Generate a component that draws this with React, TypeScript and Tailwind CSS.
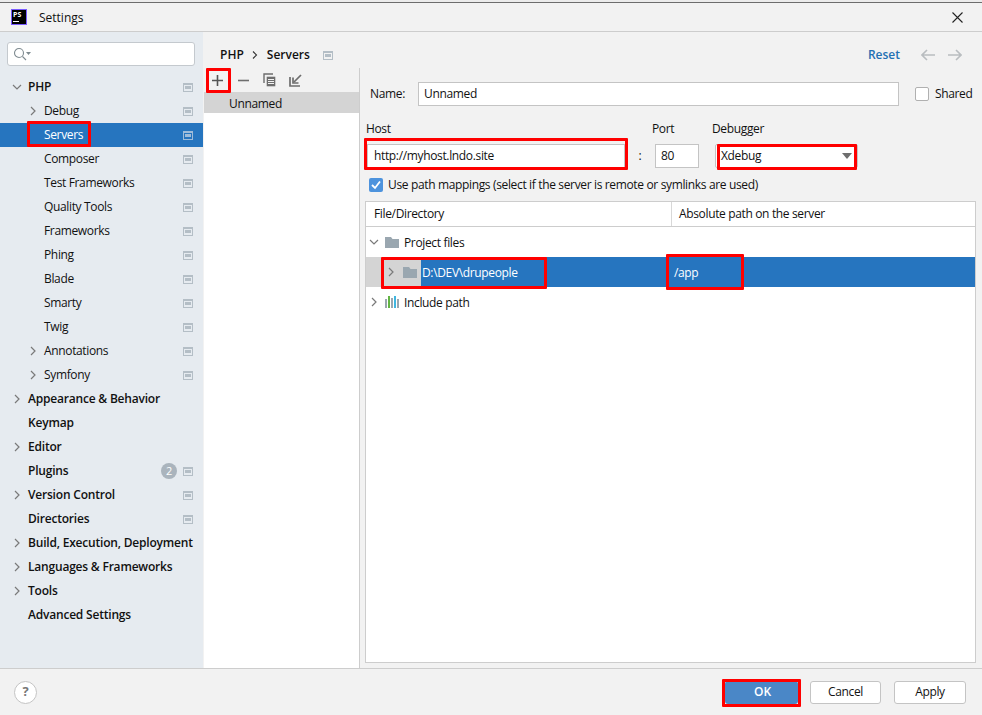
import React from "react";

const font = { fontFamily: '"Open Sans", "Noto Sans", sans-serif' };

function Chev({ open, color = "#7a7a7a" }: { open?: boolean; color?: string }) {
  return (
    <svg width="10" height="10" viewBox="0 0 10 10" fill="none" stroke={color} strokeWidth="1.2" className="shrink-0">
      {open ? <path d="M1 3 L5 7 L9 3" /> : <path d="M3 1 L7 5 L3 9" />}
    </svg>
  );
}

function Proj() {
  return (
    <svg width="14" height="12" viewBox="0 0 14 12" className="shrink-0">
      <path d="M0 1 H6 L7.5 3 H14 V12 H0 Z" fill="#9aa7b0" />
    </svg>
  );
}

function Pin({ light }: { light?: boolean }) {
  return (
    <svg width="10" height="9" viewBox="0 0 10 9" className="shrink-0">
      <rect x="0.5" y="0.5" width="9" height="8" fill="none" stroke={light ? "#9fbcd9" : "#b4bec6"} strokeWidth="1" />
      <rect x="2" y="3" width="6" height="3" fill={light ? "#9fbcd9" : "#b4bec6"} />
      <rect x="0" y="0" width="10" height="2" fill={light ? "#9fbcd9" : "#b4bec6"} />
    </svg>
  );
}

type Item = { label: string; level: 0 | 1; arrow?: "r" | "d"; pin?: boolean; sel?: boolean; badge?: string };
const items: Item[] = [
  { label: "PHP", level: 0, arrow: "d", pin: true },
  { label: "Debug", level: 1, arrow: "r", pin: true },
  { label: "Servers", level: 1, pin: true, sel: true },
  { label: "Composer", level: 1, pin: true },
  { label: "Test Frameworks", level: 1, pin: true },
  { label: "Quality Tools", level: 1, pin: true },
  { label: "Frameworks", level: 1, pin: true },
  { label: "Phing", level: 1, pin: true },
  { label: "Blade", level: 1, pin: true },
  { label: "Smarty", level: 1, pin: true },
  { label: "Twig", level: 1, pin: true },
  { label: "Annotations", level: 1, arrow: "r", pin: true },
  { label: "Symfony", level: 1, arrow: "r", pin: true },
  { label: "Appearance & Behavior", level: 0, arrow: "r" },
  { label: "Keymap", level: 0 },
  { label: "Editor", level: 0, arrow: "r" },
  { label: "Plugins", level: 0, pin: true, badge: "2" },
  { label: "Version Control", level: 0, arrow: "r", pin: true },
  { label: "Directories", level: 0, pin: true },
  { label: "Build, Execution, Deployment", level: 0, arrow: "r" },
  { label: "Languages & Frameworks", level: 0, arrow: "r" },
  { label: "Tools", level: 0, arrow: "r" },
  { label: "Advanced Settings", level: 0 },
];

function Row({ it }: { it: Item }) {
  return (
    <div className={`h-6 flex items-center pr-[10px] ${it.sel ? "bg-[#2675bf] text-white" : "text-[#111]"}`}>
      <div className={`flex items-center justify-center w-[10px] shrink-0 ${it.level ? "ml-[28px]" : "ml-[12px]"}`}>
        {it.arrow && <Chev open={it.arrow === "d"} />}
      </div>
      <span className={`ml-[6px] text-[12px] whitespace-nowrap ${it.level ? "" : "font-semibold tracking-[-0.2px]"}`}>{it.label}</span>
      <div className="flex-1" />
      {it.badge && (
        <span className="w-4 h-4 rounded-full bg-[#aab4bd] text-white text-[11px] flex items-center justify-center mr-[6px]">{it.badge}</span>
      )}
      {it.pin && <Pin light={it.sel} />}
    </div>
  );
}

function Box({ className, children }: { className: string; children?: React.ReactNode }) {
  return <div className={`bg-white border border-[#c4c4c4] flex items-center text-[12px] text-[#111] shrink-0 ${className}`}>{children}</div>;
}

function Mark({ x, y, w, h }: { x: string; y: string; w: string; h: string }) {
  return <div className={`absolute border-[3px] border-[#f00] rounded-[1px] pointer-events-none ${x} ${y} ${w} ${h}`} />;
}

export default function App() {
  return (
    <div style={font} className="relative w-[982px] h-[715px] bg-[#f2f2f2] flex flex-col overflow-hidden text-[#111] tracking-[-0.35px]">
      <div className="h-[2px] bg-[#ececec] shrink-0" />
      <div className="h-px bg-[#6d6d6d] shrink-0" />
      <div className="h-[29px] shrink-0 flex items-center border-b border-[#cdcdcd] pl-[11px] pr-[19px]">
        <div className="w-4 h-4 bg-black border border-[#7a5cff] text-white flex flex-col pl-[1px] pt-[1px] shrink-0 -mt-px">
          <span className="text-[7px] font-bold leading-[8px] tracking-normal">PS</span>
          <span className="w-[6px] h-px bg-white mt-[2px]" />
        </div>
        <span className="ml-[12px] text-[12px] mt-[2px] tracking-normal">Settings</span>
        <div className="flex-1" />
        <svg width="11" height="11" viewBox="0 0 11 11" stroke="#222" strokeWidth="1.1"><path d="M.5.5l10 10M10.5.5l-10 10" /></svg>
      </div>
      <div className="flex-1 flex min-h-0">
        <aside className="w-[203px] bg-[#e6ebf0] shrink-0 flex flex-col">
          <div className="ml-[7px] mr-[8px] mt-[10px] mb-[9px] h-6 bg-white border border-[#c4c9ce] rounded-[3px] flex items-center pl-[5px] shrink-0">
            <svg width="18" height="14" viewBox="0 0 18 14" fill="none" stroke="#7f8b91" strokeWidth="1.1">
              <circle cx="6" cy="6" r="4.5" />
              <path d="M9.5 9.5 L13 13" />
              <path d="M13 5 h5 l-2.5 3 z" fill="#7f8b91" stroke="none" />
            </svg>
          </div>
          {items.map((it) => <Row key={it.label} it={it} />)}
        </aside>
        <div className="w-px bg-[#f2f2f2] shrink-0" />
        <main className="flex-1 flex flex-col min-w-0">
          <div className="h-[36px] shrink-0 flex items-center pl-[16px] pr-[20px] pt-[10px] tracking-normal">
            <span className="text-[12px] font-semibold">PHP</span>
            <svg className="ml-[8px] mr-[9px]" width="6" height="8" viewBox="0 0 6 8" fill="none" stroke="#333" strokeWidth="1.1"><path d="M1 .5L4.5 4 1 7.5" /></svg>
            <span className="text-[12px] font-semibold">Servers</span>
            <span className="ml-[13px]"><Pin /></span>
            <div className="flex-1" />
            <span className="text-[12px] font-semibold text-[#2470b3]">Reset</span>
            <svg className="ml-[21px]" width="14" height="12" viewBox="0 0 14 12" fill="none" stroke="#b9bdc0" strokeWidth="1.6"><path d="M14 6H1M6 1L1 6l5 5" /></svg>
            <svg className="ml-[13px]" width="14" height="12" viewBox="0 0 14 12" fill="none" stroke="#b9bdc0" strokeWidth="1.6"><path d="M0 6h13M8 1l5 5-5 5" /></svg>
          </div>
          <div className="flex-1 flex min-h-0">
            <div className="w-[156px] shrink-0 bg-white border-r border-[#cdcdcd] flex flex-col">
              <div className="h-6 bg-[#f2f2f2] flex items-center pl-[7px] gap-[13px] shrink-0">
                <svg width="13" height="13" viewBox="0 0 13 13" stroke="#555" strokeWidth="1.6"><path d="M6.5 1v11M1 6.5h11" /></svg>
                <svg width="13" height="13" viewBox="0 0 13 13" stroke="#6e6e6e" strokeWidth="1.6"><path d="M1 6.5h11" /></svg>
                <svg width="13" height="14" viewBox="0 0 13 14" fill="none" stroke="#6e6e6e" strokeWidth="1.4"><path d="M1 10V1h9" /><rect x="3.7" y="3.7" width="8.6" height="9.6" fill="#6e6e6e" stroke="none" /><path d="M5 6.5h6M5 8.5h6M5 10.5h6" stroke="#f2f2f2" strokeWidth="1" /></svg>
                <svg width="13" height="13" viewBox="0 0 13 13" fill="none" stroke="#6e6e6e" strokeWidth="1.7"><path d="M1 3v9h10" /><path d="M12 1L5 8" /><path d="M4 3.5V9h5.5" /></svg>
              </div>
              <div className="h-[21px] bg-[#d4d4d4] flex items-center pl-[25px] pt-[2px] text-[12px] shrink-0">Unnamed</div>
            </div>
            <div className="flex-1 min-w-0 pl-[5px] pr-[6px] flex flex-col">
              <div className="flex items-center mt-[14px] h-6 shrink-0">
                <span className="text-[12px] ml-[5px] w-[48px] shrink-0">Name:</span>
                <Box className="w-[481px] h-6 pl-[5px]">Unnamed</Box>
                <div className="ml-[16px] w-[14px] h-[14px] bg-white border border-[#b0b0b0] rounded-[2px] shrink-0" />
                <span className="ml-[6px] text-[12px]">Shared</span>
              </div>
              <div className="flex mt-[14px] h-[17px] items-center text-[12px] shrink-0">
                <span className="w-[287px] pl-[1px]">Host</span>
                <span className="w-[60px]">Port</span>
                <span>Debugger</span>
              </div>
              <div className="flex items-center mt-[7px] h-[24px] text-[12px] shrink-0">
                <Box className="ml-[2px] w-[258px] h-6 pl-[6px]">http://myhost.lndo.site</Box>
                <span className="w-[30px] text-center shrink-0">:</span>
                <Box className="w-[44px] h-6 pl-[5px]">80</Box>
                <div className="ml-[16px] w-[143px] h-6 bg-white border border-[#c4c4c4] rounded-[2px] flex items-center pl-[5px] pr-[5px] justify-between shrink-0">
                  <span>Xdebug</span>
                  <svg width="10" height="6" viewBox="0 0 10 6"><path d="M0 0h10L5 6z" fill="#6e6e6e" /></svg>
                </div>
              </div>
              <div className="flex items-center mt-[9px] h-[16px] pl-[4px] text-[12px] shrink-0">
                <div className="w-[14px] h-[14px] bg-[#4d93dd] rounded-[2px] flex items-center justify-center shrink-0">
                  <svg width="10" height="10" viewBox="0 0 10 10" fill="none" stroke="#fff" strokeWidth="1.8"><path d="M1 5l3 3 5-6.5" /></svg>
                </div>
                <span className="ml-[5px] whitespace-nowrap">Use path mappings (select if the server is remote or symlinks are used)</span>
              </div>
              <div className="flex-1 mt-[8px] mb-[5px] bg-white border border-[#cdcdcd] flex flex-col min-h-0 text-[12px]">
                <div className="h-[25px] flex items-center border-b border-[#cdcdcd] shrink-0">
                  <span className="w-[306px] pl-[8px] h-full flex items-center border-r border-[#d8d8d8]">File/Directory</span>
                  <span className="pl-[7px]">Absolute path on the server</span>
                </div>
                <div className="h-[30px] flex items-center pl-[3px] shrink-0">
                  <Chev open />
                  <span className="ml-[6px]"><Proj /></span>
                  <span className="ml-[5px] mt-[2px]">Project files</span>
                </div>
                <div className="h-[30px] flex bg-[#2675bf] text-white shrink-0">
                  <div className="w-[55px] bg-[#d4d4d4] flex items-center pl-[20px] gap-[7px] shrink-0">
                    <Chev />
                    <Proj />
                  </div>
                  <span className="w-[251px] flex items-center pl-px pt-[2px] shrink-0">D:\DEV\drupeople</span>
                  <span className="pl-[2px] pt-[2px] flex items-center">/app</span>
                </div>
                <div className="h-[30px] flex items-center pl-[3px] shrink-0">
                  <Chev />
                  <svg className="ml-[6px]" width="14" height="12" viewBox="0 0 14 12">
                    <rect x="0" y="3" width="2" height="9" fill="#9aa7b0" />
                    <rect x="3" y="0" width="2" height="12" fill="#62b543" />
                    <rect x="6" y="2" width="2" height="10" fill="#9aa7b0" />
                    <rect x="9" y="0" width="2" height="12" fill="#40b6e0" />
                    <rect x="12" y="3" width="2" height="9" fill="#9aa7b0" />
                  </svg>
                  <span className="ml-[5px] mt-[2px]">Include path</span>
                </div>
              </div>
            </div>
          </div>
        </main>
      </div>
      <footer className="h-[47px] shrink-0 border-t border-[#cdcdcd] flex items-center pl-[14px] pr-[16px] text-[12px]">
        <div className="w-[23px] h-[23px] rounded-full bg-white border border-[#c4c4c4] flex items-center justify-center text-[13px] font-bold text-[#777]">?</div>
        <div className="flex-1" />
        <button className="w-[73px] h-[23px] rounded-[3px] bg-[#4a87c7] text-white font-semibold tracking-normal pl-[2px]">OK</button>
        <button className="ml-[12px] w-[71px] h-[23px] rounded-[3px] bg-white border border-[#c4c4c4]">Cancel</button>
        <button className="ml-[13px] w-[72px] h-[23px] rounded-[3px] bg-white border border-[#c4c4c4]">Apply</button>
      </footer>
      <Mark x="left-[27px]" y="top-[121px]" w="w-[64px]" h="h-[26px]" />
      <Mark x="left-[206px]" y="top-[68px]" w="w-[25px]" h="h-[25px]" />
      <Mark x="left-[364px]" y="top-[138px]" w="w-[264px]" h="h-[32px]" />
      <Mark x="left-[717px]" y="top-[144px]" w="w-[140px]" h="h-[26px]" />
      <Mark x="left-[381px]" y="top-[257px]" w="w-[166px]" h="h-[32px]" />
      <Mark x="left-[666px]" y="top-[254px]" w="w-[78px]" h="h-[36px]" />
      <Mark x="left-[722px]" y="top-[679px]" w="w-[79px]" h="h-[28px]" />
    </div>
  );
}
